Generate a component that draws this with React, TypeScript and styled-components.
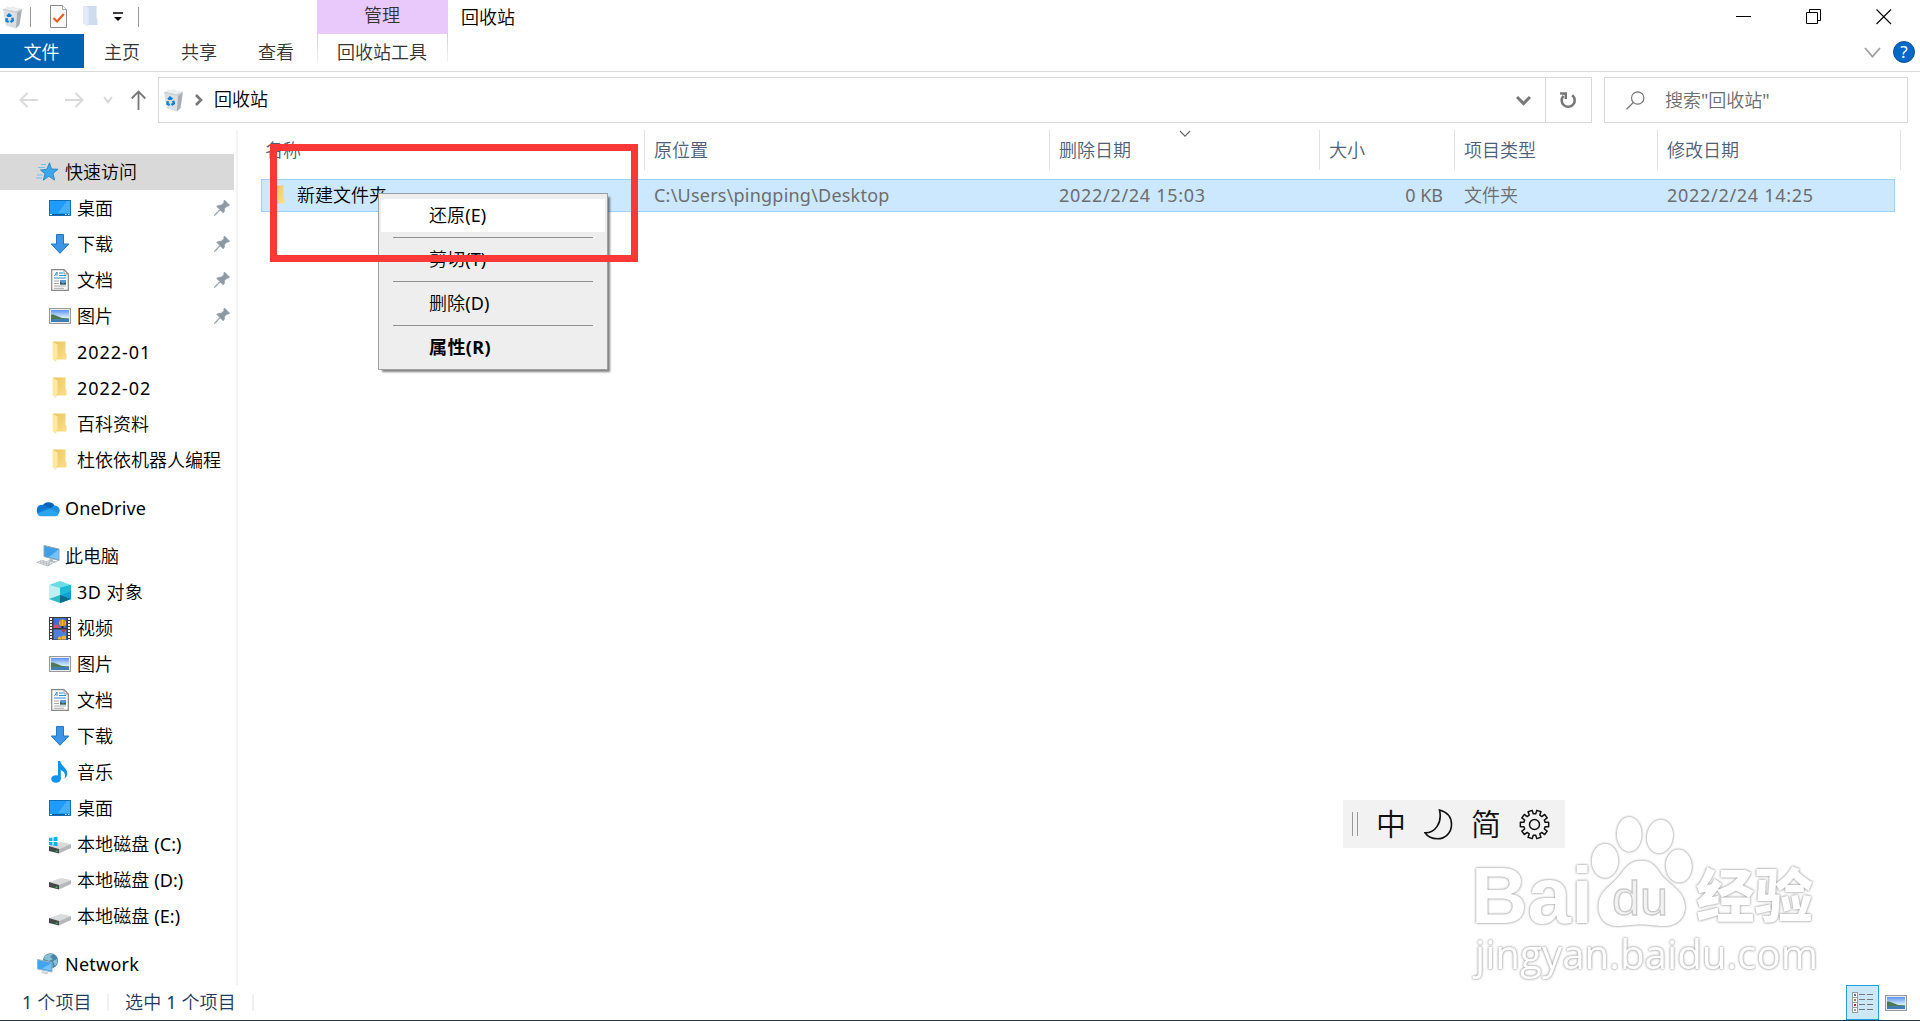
import type { ReactNode } from "react"
import { createGlobalStyle, styled } from "styled-components"

const theme = {
  text: "#000000",
  ribbonText: "#333333",
  headerText: "#4c607a",
  mutedText: "#6d6d6d",
  line: "#d9d9d9",
  accent: "#0063b1",
  selected: "#cce8ff",
  selectedBorder: "#99d1ff",
  frame: "#fb3838",
}

/* ---------- icons ---------- */

const RecycleBinIcon = () => (
  <svg width="21" height="24" viewBox="0 0 21 24">
    <path d="M1 4.500 15 7.500 13.800 23.500 3.800 20.500Z" fill="#dcdfe1" />
    <path d="M15 7.500 20 4 17.500 20 13.800 23.500Z" fill="#a9aeb2" />
    <path d="M1 4.500 6 2.500 20 4 15 7.500Z" fill="#c0c4c7" />
    <path d="M3 4.200 5 1 8 2.500 11 .8 14 3 17 2.500 18.500 4.300 14 6.500Z" fill="#eceeef" />
    <path d="M1 4.500 15 7.500 20 4" fill="none" stroke="#cdd0d3" />
    <path
      d="M5.200 11.500 7 9.500 9.300 11.200M10.300 12.800 10.800 15.500 8.500 17M6.700 17 4.500 15.800 4.700 13.200"
      fill="none"
      stroke="#0f80d8"
      strokeWidth="2.400"
    />
  </svg>
)

const CheckDocIcon = () => (
  <svg width="18" height="23" viewBox="0 0 18 23">
    <path d="M.5 .5H12.500L16.500 4.500V22.500H.5Z" fill="#f9f9f9" stroke="#8b8b8b" />
    <path d="M12.500 .5V4.500H16.500" fill="#fff" stroke="#a8a8a8" />
    <path d="M3.500 13 7 16.500 13.800 9" fill="none" stroke="#f05a1a" strokeWidth="2.200" />
  </svg>
)

const PaleFolderIcon = () => (
  <svg width="15" height="21" viewBox="0 0 15 21">
    <path d="M3 0H13.500V12L14.500 13V19H3Z" fill="#cfdcf0" />
    <path d="M0 0H3L5.500 2.500V20.500L0 18Z" fill="#e3ebf8" />
  </svg>
)

const FolderIcon = () => (
  <svg width="15" height="22" viewBox="0 0 15 22">
    <defs>
      <linearGradient id="folderBack" x1="0" y1="0" x2="1" y2="1">
        <stop offset="0" stopColor="#e9c560" />
        <stop offset="1" stopColor="#fbdf8b" />
      </linearGradient>
    </defs>
    <path d="M1 .5H13.500V12L14.500 13V18.500H3Z" fill="url(#folderBack)" />
    <path d="M.5 .5 5.500 3.500V16.500L4.300 17V21.500L.5 18Z" fill="#ffe9a2" />
  </svg>
)

const StarIcon = () => (
  <svg width="23" height="20" viewBox="0 0 23 20">
    <path
      d="M13.500 .8 15.500 7 22 7.200 17 11.500 18.600 18 12.800 14.300 7.300 18.200 9 11.700 4.500 8 10.800 7.300Z"
      fill="#3ba7ea"
      stroke="#1b7fc4"
      strokeWidth=".8"
    />
    <path d="M5 2.500H10M2 5.500H9M1 13H7M0 16H6" stroke="#79bce8" />
  </svg>
)

const DesktopIcon = () => (
  <svg width="22" height="16" viewBox="0 0 22 16">
    <rect x=".5" y=".5" width="21" height="15" fill="#1e9bfb" stroke="#0f6fb8" />
    <path d="M21 1V13L9 13 18 1Z" fill="#43aefc" />
    <path d="M1 14.500H21" stroke="#0d5c9d" />
    <path d="M1 14.500H3M16 14.500H17.500M19 14.500H20.500" stroke="#e8f5ff" />
  </svg>
)

const DownloadIcon = () => (
  <svg width="20" height="20" viewBox="0 0 20 20">
    <path
      d="M6.500 .5H13.500V10H18.800L10 19.300 1.200 10H6.500Z"
      fill="#3c95e6"
      stroke="#2577c0"
    />
  </svg>
)

const DocumentIcon = () => (
  <svg width="18" height="22" viewBox="0 0 18 22">
    <path d="M.7 .7H13L17.300 5V21.300H.7Z" fill="#fdfdfd" stroke="#888" strokeWidth="1.200" />
    <path d="M13 .7V5H17.300" fill="none" stroke="#999" />
    <path d="M3.500 7 6 3V7M8 4H12M8 6.500H15M3 9H15" stroke="#2b8fcb" fill="none" />
    <path d="M3 12H8M3 14.500H8M3 17H15M3 19.300H13" stroke="#aaa" />
    <rect x="9" y="11" width="6" height="4.500" fill="#5b9ad6" />
    <path d="M9 15.500V13L12 14.500 15 13.500V15.500Z" fill="#31584a" />
  </svg>
)

const PictureIcon = () => (
  <svg width="22" height="16" viewBox="0 0 22 16">
    <defs>
      <linearGradient id="sky" x1="0" y1="0" x2="0" y2="1">
        <stop offset="0" stopColor="#5b94f5" />
        <stop offset=".6" stopColor="#d6eaf8" />
        <stop offset="1" stopColor="#9fc6e8" />
      </linearGradient>
    </defs>
    <rect x=".6" y=".6" width="20.800" height="14.800" fill="#fff" stroke="#9a9a9a" strokeWidth="1.200" />
    <rect x="2" y="2" width="18" height="12" fill="url(#sky)" />
    <path d="M2 6.500C6 6 9 9 14 10L20 10.500V11L2 12Z" fill="#4c7a57" />
    <path d="M2 11.500 20 10.800V14H2Z" fill="#3e7eb2" />
  </svg>
)

const OneDriveIcon = () => (
  <svg width="25" height="17" viewBox="0 0 25 17">
    <path d="M7 7A7 7 0 0 1 19.500 5.500L15 11Z" fill="#0b63b8" />
    <path d="M6 15.500A5.500 5.500 0 0 1 6.500 4.700Q9 4.500 11 6L17 9.500 8 15.500Z" fill="#1177cf" />
    <path d="M14 9 19.500 5.500A5 5 0 0 1 24.700 11Q24.500 14 22 14.500Z" fill="#2090e0" />
    <path d="M2 13.500 14.300 8.500 24 13.500Q22.500 16.300 20 16.300H6Q3.500 16.300 2 13.500Z" fill="#2ba4ee" />
  </svg>
)

const ComputerIcon = () => (
  <svg width="24" height="22" viewBox="0 0 24 22">
    <path d="M8 .5 23 4V15.500L8 11.500Z" fill="#3d9fe8" stroke="#9aa8b2" />
    <path d="M22.500 4.500V14.500L13 12Z" fill="#74c3fb" />
    <path d="M14 13.500 17 14.500V16L22 16.500 18 18 11 16 13.500 15Z" fill="#b4bbc0" />
    <path d="M0 17.200 6 14.700 17 18.300 12 21.500Z" fill="#b4babf" />
    <path d="M2.500 17 12 20M5 15.800 15 18.800" stroke="#f0f2f3" strokeDasharray="2 1" />
  </svg>
)

const CubeIcon = () => (
  <svg width="22" height="22" viewBox="0 0 22 22">
    <path d="M0 4 11 0 22 4 11 8Z" fill="#6bdce4" />
    <path d="M0 4 11 7V22L0 18Z" fill="#c2eff1" />
    <path d="M22 4 11 7V22L22 18Z" fill="#109fdc" />
    <path d="M11 7 22 4V10L11 15Z" fill="#22b8d8" />
    <path d="M0 18 11 14 22 18 11 22Z" fill="#31b9c7" />
    <path d="M11 14 22 18 11 22Z" fill="#0a6c88" />
  </svg>
)

const VideoIcon = () => (
  <svg width="22" height="23" viewBox="0 0 22 23">
    <rect width="22" height="23" fill="#3a3a3a" />
    <path d="M2 1V23M20 1V23" stroke="#f2f2f2" strokeWidth="2" strokeDasharray="2 1" />
    <rect x="4.500" y="1" width="13" height="10" fill="#3d6fd0" />
    <rect x="4.500" y="12.500" width="13" height="10" fill="#4c80dc" />
    <path d="M4.500 8.500Q7 6.500 9.500 8.500L11 11H4.500Z" fill="#d64b78" />
    <ellipse cx="13.500" cy="6" rx="3.500" ry="3.500" fill="#f0bd1c" />
    <path d="M12 3V9M15 3V9" stroke="#c4471d" strokeWidth=".7" />
    <path d="M12.500 9H14.500V11H12.500Z" fill="#222" />
    <path d="M12 12.500H17L14.500 16Z" fill="#c03b3b" />
    <path d="M9 22.500V20.500L11 19 12.500 22.500ZM12.500 22.500 12.500 19.500Q15 17.500 17 19.500V22.500Z" fill="#eeb22c" />
  </svg>
)

const MusicIcon = () => (
  <svg width="17" height="22" viewBox="0 0 17 22">
    <ellipse cx="5" cy="18" rx="4.800" ry="3.800" fill="#0e93ee" />
    <path
      d="M7 0H9.300C9.800 4.500 16 7 16.300 12 16.300 15 15 16.500 13.500 17.500 15 13 13 10.500 9.800 9V18H7Z"
      fill="#0e93ee"
    />
  </svg>
)

const DriveIcon = ({ system = false }: { system?: boolean }) => (
  <svg width="22" height="24" viewBox="0 0 22 24">
    <path d="M0 14 12 10 22 12 10 17Z" fill="#d9dadc" />
    <path d="M10 17 22 12V16L10 21.500Z" fill="#b5b7ba" />
    <path d="M0 14 10 17V21.500L0 19Z" fill="#45474a" />
    <path d="M7.500 18.700V19.800" stroke="#3fe04c" strokeWidth="1.800" />
    {system && (
      <path
        d="M0 6 3.500 5.500V9H0ZM4.500 5.300 8.500 4.800V9H4.500ZM0 10H3.500V13.500L0 13ZM4.500 10H8.500V14.200L4.500 13.700Z"
        fill="#12b0ee"
      />
    )}
  </svg>
)

const NetworkIcon = () => (
  <svg width="22" height="22" viewBox="0 0 22 22">
    <circle cx="13.500" cy="7.800" r="7.600" fill="#4688ad" />
    <path d="M8 3Q13 0 16 1L13 4 16 6 12 8 7 6ZM16 8 20 6Q21 10 18 13Z" fill="#8dc0d4" />
    <path d="M.5 6.500 15 9.500V19L.5 16Z" fill="#3fa5ee" stroke="#a3b3be" />
    <path d="M14 10.500V17.500L5 15.500Z" fill="#70c2fa" />
    <path d="M5 18 12 19.500 10 21.500 4 20Z" fill="#cfd3d6" />
  </svg>
)

const PinIcon = () => (
  <svg width="16" height="16" viewBox="0 0 16 16">
    <path
      d="M10.500 0 15.700 5.200 14 6.200 13 6 10.500 8.800Q11 11.500 9.300 13L6.200 9.900 .8 15.700 .2 15.200 5.800 9.500 2.700 6.300Q4.300 4.800 7 5.300L10 2.700 9.600 1.600Z"
      fill="#8d9aa4"
      stroke="#8d9aa4"
      strokeWidth=".6"
    />
  </svg>
)

const BackIcon = () => (
  <svg width="19" height="16" viewBox="0 0 19 16">
    <path d="M8.500 1 1.500 8 8.500 15M1.500 8H19" fill="none" stroke="#dadada" strokeWidth="2" />
  </svg>
)

const ForwardIcon = () => (
  <svg width="19" height="16" viewBox="0 0 19 16">
    <path d="M10.500 1 17.500 8 10.500 15M17.500 8H0" fill="none" stroke="#dadada" strokeWidth="2" />
  </svg>
)

const UpIcon = () => (
  <svg width="15" height="20" viewBox="0 0 15 20">
    <path d="M.7 8.500 7.500 1.500 14.300 8.500M7.500 1.500V20" fill="none" stroke="#787878" strokeWidth="1.800" />
  </svg>
)

interface ChevronProps {
  width: number
  height: number
  color: string
  weight: number
}

const ChevronDown = ({ width, height, color, weight }: ChevronProps) => (
  <svg width={width} height={height} viewBox={`0 0 ${width} ${height}`}>
    <path
      d={`M1 1 ${width / 2} ${height - weight * 0.8} ${width - 1} 1`}
      fill="none"
      stroke={color}
      strokeWidth={weight}
    />
  </svg>
)

const ChevronRight = () => (
  <svg width="8" height="12" viewBox="0 0 8 12">
    <path d="M1 1 6 6 1 11" fill="none" stroke="#777" strokeWidth="2.600" />
  </svg>
)

const RefreshIcon = () => (
  <svg width="17" height="17" viewBox="0 0 17 17">
    <path d="M12.200 3.200A6.500 6.500 0 1 1 3.500 3.800" fill="none" stroke="#777" strokeWidth="2.600" />
    <path d="M0 .3H7V7H4.600V3L0 2.600Z" fill="#777" />
  </svg>
)

const SearchIcon = () => (
  <svg width="19" height="19" viewBox="0 0 19 19">
    <circle cx="11.700" cy="7" r="6.200" fill="none" stroke="#767676" strokeWidth="1.200" />
    <path d="M7.300 11.500 .6 18.300" stroke="#767676" strokeWidth="1.300" />
  </svg>
)

const DetailsViewIcon = () => (
  <svg width="22" height="22" viewBox="0 0 22 22">
    <rect x=".5" y=".5" width="5" height="20" fill="#fff" stroke="#9a9a9a" />
    <path d="M0 5.500H6M0 10.500H6M0 15.500H6" stroke="#9a9a9a" />
    <rect x="2" y="2" width="2" height="2" fill="#3d7ca8" />
    <rect x="2" y="7" width="2" height="2" fill="#7c8c2e" />
    <rect x="2" y="12" width="2" height="2" fill="#a33333" />
    <rect x="2" y="17" width="2" height="2" fill="#8aa7b8" />
    <path d="M7 2.500H13M15 2.500H21M7 7.500H13M15 7.500H21M7 12.500H13M15 12.500H21M7 17.500H13M15 17.500H21" stroke="#777" />
  </svg>
)

const MoonIcon = () => (
  <svg width="29" height="31" viewBox="0 0 29 31">
    <path
      d="M15.500 1C24 3.200 27.500 9 27.500 15.500 27.500 24 21 29.800 13.500 29.800 8 29.800 3.500 27.500 1 23.800 11 24 18.500 14 15.500 1Z"
      fill="none"
      stroke="#111"
      strokeWidth="1.600"
    />
  </svg>
)

const TEETH = 10

const gearPath = () => {
  const points: string[] = []
  for (let i = 0; i < TEETH; i++) {
    const middle = ((i + 0.5) / TEETH) * Math.PI * 2 - Math.PI / 2
    const corners = [
      [-0.2, 10.8],
      [-0.15, 14.3],
      [0.15, 14.3],
      [0.2, 10.8],
    ]
    corners.forEach(([offset, r]) => {
      const x = 15.5 + Math.cos(middle + offset) * r
      const y = 15.5 + Math.sin(middle + offset) * r
      points.push(`${x.toFixed(2)} ${y.toFixed(2)}`)
    })
  }
  return `M${points.join("L")}Z`
}

const GearIcon = () => (
  <svg width="31" height="31" viewBox="0 0 31 31">
    <path d={gearPath()} fill="none" stroke="#111" strokeWidth="1.500" strokeLinejoin="round" />
    <circle cx="15.500" cy="15.500" r="5" fill="none" stroke="#111" strokeWidth="1.500" />
  </svg>
)

const Watermark = () => (
  <WatermarkSvg width="370" height="190" viewBox="1465 800 370 190">
    <g className="glow">
      <text x="1471" y="923" fontSize="79" fontWeight="700" textLength="122" lengthAdjust="spacingAndGlyphs">
        Bai
      </text>
      <text x="1696" y="917" fontSize="58" fontWeight="900" textLength="117" lengthAdjust="spacingAndGlyphs">
        经验
      </text>
      <text x="1475" y="969" fontSize="40" className="url" textLength="343" lengthAdjust="spacingAndGlyphs">
        jingyan.baidu.com
      </text>
    </g>
    <g className="glow">
      <ellipse cx="1605" cy="860.700" rx="13.300" ry="17" />
      <ellipse cx="1629.200" cy="834.300" rx="12.400" ry="17.400" />
      <ellipse cx="1659.900" cy="836.500" rx="13" ry="16.800" transform="rotate(8 1659.900 836.500)" />
      <ellipse cx="1678.800" cy="866" rx="13" ry="16.600" transform="rotate(-4 1678.800 866)" />
      <path d="M1641.600 860.700C1652 860.700 1656 867 1660 873 1666 883 1685 890 1685 907 1685 919 1676 926 1664 926 1655 926 1650 924.500 1641 924.500 1632 924.500 1626 926 1617 926 1605 926 1598.500 918 1598.500 907 1598.500 890 1612 886 1620 875 1626 867 1630 860.700 1641.600 860.700Z" />
    </g>
    <text
      x="1612"
      y="915"
      fontSize="48"
      fill="#f2f2f2"
      stroke="#cacaca"
      strokeWidth="1.300"
      textLength="56"
      lengthAdjust="spacingAndGlyphs"
    >
      du
    </text>
  </WatermarkSvg>
)

/* ---------- data ---------- */

interface NavEntry {
  label: string
  icon: ReactNode
  root?: boolean
  pinned?: boolean
  active?: boolean
  spacing?: number
}

const navGroups: NavEntry[][] = [
  [
    { label: "快速访问", icon: <StarIcon />, root: true, active: true },
    { label: "桌面", icon: <DesktopIcon />, pinned: true },
    { label: "下载", icon: <DownloadIcon />, pinned: true },
    { label: "文档", icon: <DocumentIcon />, pinned: true },
    { label: "图片", icon: <PictureIcon />, pinned: true },
    { label: "2022-01", icon: <FolderIcon />, spacing: 0.95 },
    { label: "2022-02", icon: <FolderIcon />, spacing: 0.95 },
    { label: "百科资料", icon: <FolderIcon /> },
    { label: "杜依依机器人编程", icon: <FolderIcon /> },
  ],
  [{ label: "OneDrive", icon: <OneDriveIcon />, root: true, spacing: 0.15 }],
  [
    { label: "此电脑", icon: <ComputerIcon />, root: true },
    { label: "3D 对象", icon: <CubeIcon />, spacing: 0.5 },
    { label: "视频", icon: <VideoIcon /> },
    { label: "图片", icon: <PictureIcon /> },
    { label: "文档", icon: <DocumentIcon /> },
    { label: "下载", icon: <DownloadIcon /> },
    { label: "音乐", icon: <MusicIcon /> },
    { label: "桌面", icon: <DesktopIcon /> },
    { label: "本地磁盘 (C:)", icon: <DriveIcon system />, spacing: 0.1 },
    { label: "本地磁盘 (D:)", icon: <DriveIcon />, spacing: 0.1 },
    { label: "本地磁盘 (E:)", icon: <DriveIcon />, spacing: 0.1 },
  ],
  [{ label: "Network", icon: <NetworkIcon />, root: true, spacing: 0.25 }],
]

const menuItems = ["还原(E)", "剪切(T)", "删除(D)", "属性(R)"]

/* ---------- page ---------- */

const App = () => {
  return (
    <>
      <GlobalStyle />
      <Window>
        <TitleBar>
          <QuickAccess>
            <RecycleBinIcon />
            <Divider $left={7} />
            <Slot $left={19}>
              <CheckDocIcon />
            </Slot>
            <Slot $left={15}>
              <PaleFolderIcon />
            </Slot>
            <Slot $left={15}>
              <svg width="10" height="10" viewBox="0 0 10 10">
                <path d="M0 1H10" stroke="#000" strokeWidth="1.500" />
                <path d="M1 5H9L5 9Z" fill="#000" />
              </svg>
            </Slot>
            <Divider $left={15} />
          </QuickAccess>
          <ContextTabTitle>管理</ContextTabTitle>
          <WindowTitle>回收站</WindowTitle>
          <WindowButtons>
            <svg width="16" height="16" viewBox="0 0 16 16">
              <path d="M0 7.500H15" stroke="#000" />
            </svg>
            <svg width="16" height="16" viewBox="0 0 16 16">
              <path d="M.5 3.500H11.500V14.500H.5ZM3.500 3.500V.5H14.500V11.500H11.500" fill="none" stroke="#000" />
            </svg>
            <svg width="16" height="16" viewBox="0 0 16 16">
              <path d="M.5 .5 15 15M15 .5 .5 15" stroke="#000" strokeWidth="1.100" />
            </svg>
          </WindowButtons>
        </TitleBar>

        <Ribbon>
          <FileTab>文件</FileTab>
          <RibbonTab>主页</RibbonTab>
          <RibbonTab>共享</RibbonTab>
          <RibbonTab>查看</RibbonTab>
          <ContextTab>回收站工具</ContextTab>
          <RibbonEnd>
            <ChevronDown width={17} height={11} color="#a0a0a0" weight={1.8} />
            <HelpBadge>?</HelpBadge>
          </RibbonEnd>
        </Ribbon>

        <AddressRow>
          <NavButtons>
            <BackIcon />
            <Slot $left={27}>
              <ForwardIcon />
            </Slot>
            <Slot $left={19}>
              <ChevronDown width={10} height={8} color="#d6d6d6" weight={2} />
            </Slot>
            <Slot $left={18}>
              <UpIcon />
            </Slot>
          </NavButtons>
          <AddressBox>
            <RecycleBinIcon />
            <Slot $left={11}>
              <ChevronRight />
            </Slot>
            <AddressText>回收站</AddressText>
            <AddressDrop>
              <ChevronDown width={15} height={10} color="#777" weight={3} />
            </AddressDrop>
            <RefreshButton>
              <RefreshIcon />
            </RefreshButton>
          </AddressBox>
          <SearchBox>
            <SearchIcon />
            <span>搜索"回收站"</span>
          </SearchBox>
        </AddressRow>

        <Body>
          <Sidebar>
            {navGroups.map((group, g) => (
              <NavGroup key={g}>
                {group.map((entry) => (
                  <NavItem key={entry.label} $root={entry.root} $active={entry.active}>
                    <NavIcon>{entry.icon}</NavIcon>
                    <NavLabel $spacing={entry.spacing}>{entry.label}</NavLabel>
                    {entry.pinned && <PinIcon />}
                  </NavItem>
                ))}
              </NavGroup>
            ))}
          </Sidebar>

          <FileList>
            <HeaderRow>
              <HeaderCell $left={4}>名称</HeaderCell>
              <HeaderCell>原位置</HeaderCell>
              <HeaderCell>
                删除日期
                <SortMark>
                  <ChevronDown width={12} height={7} color="#666" weight={1.1} />
                </SortMark>
              </HeaderCell>
              <HeaderCell>大小</HeaderCell>
              <HeaderCell>项目类型</HeaderCell>
              <HeaderCell>修改日期</HeaderCell>
            </HeaderRow>
            <FileRow>
              <NameCell>
                <FolderIcon />
                <span>新建文件夹</span>
              </NameCell>
              <Cell $spacing={0.22}>C:\Users\pingping\Desktop</Cell>
              <Cell $spacing={0.7}>2022/2/24 15:03</Cell>
              <SizeCell>0 KB</SizeCell>
              <Cell>文件夹</Cell>
              <Cell $spacing={0.7}>2022/2/24 14:25</Cell>
            </FileRow>
          </FileList>
        </Body>

        <StatusBar>
          <StatusText $width={87}>1 个项目</StatusText>
          <StatusText $width={129}>选中 1 个项目</StatusText>
          <ViewButtons>
            <ViewButton>
              <DetailsViewIcon />
            </ViewButton>
            <PictureIcon />
          </ViewButtons>
        </StatusBar>

        <ContextMenu>
          {menuItems.map((item, i) => (
            <MenuItem key={item} $hover={i === 0} $bold={i === menuItems.length - 1}>
              {item}
            </MenuItem>
          ))}
        </ContextMenu>
        <RedFrame />
        <ImeBar>
          <ImeGrip />
          <span>中</span>
          <MoonIcon />
          <span>简</span>
          <GearIcon />
        </ImeBar>
        <Watermark />
      </Window>
    </>
  )
}

const GlobalStyle = createGlobalStyle`
  * {
    box-sizing: border-box;
  }

  body {
    margin: 0;
    background: #fff;
    overflow: hidden;
  }

  svg {
    display: block;
    flex: none;
  }
`

const Window = styled.div`
  position: relative;
  display: flex;
  flex-direction: column;
  width: 1920px;
  height: 1021px;
  background: #fff;
  color: ${theme.text};
  font-family: "Noto Sans", "Noto Sans CJK SC DemiLight", "Noto Sans CJK SC", sans-serif;
  font-size: 18px;
  line-height: 24px;
  white-space: nowrap;
  border-bottom: 1px solid #20384c;
`

const TitleBar = styled.div`
  display: flex;
  height: 34px;
`

const QuickAccess = styled.div`
  display: flex;
  align-items: center;
  width: 317px;
  padding: 0 0 1px 2px;
`

const Slot = styled.div<{ $left: number }>`
  margin-left: ${({ $left }) => $left}px;
`

const Divider = styled.div<{ $left: number }>`
  width: 1px;
  height: 20px;
  margin-left: ${({ $left }) => $left}px;
  background: #999;
`

const ContextTabTitle = styled.div`
  width: 131px;
  padding: 3px 1px 0 0;
  background: #e9c9fb;
  color: ${theme.ribbonText};
  text-align: center;
`

const WindowTitle = styled.div`
  padding: 5px 0 0 13px;
`

const WindowButtons = styled.div`
  display: flex;
  gap: 54px;
  margin-left: auto;
  padding: 9px 28px 0 0;
`

const Ribbon = styled.div`
  display: flex;
  height: 38px;
  border-bottom: 1px solid ${theme.line};
  color: ${theme.ribbonText};
`

const RibbonTab = styled.div`
  width: 77px;
  padding: 6px 1px 0 0;
  text-align: center;
`

const FileTab = styled(RibbonTab)`
  width: 84px;
  height: 34px;
  background: ${theme.accent};
  color: #fff;
`

const ContextTab = styled(RibbonTab)`
  width: 131px;
  height: 28px;
  margin-left: 2px;
  border-style: solid;
  border-width: 0 1px;
  border-image: linear-gradient(#cfcfcf, #f4f4f4) 1;
`

const RibbonEnd = styled.div`
  display: flex;
  align-items: center;
  gap: 12px;
  height: 36px;
  margin-left: auto;
  padding-right: 5px;
`

const HelpBadge = styled.div`
  width: 22px;
  height: 22px;
  border: 1px solid #0a4f96;
  border-radius: 50%;
  background: #0069c8;
  color: #fff;
  font-size: 17px;
  line-height: 20px;
  text-align: center;
`

const AddressRow = styled.div`
  display: flex;
  height: 58px;
  padding-top: 5px;
`

const NavButtons = styled.div`
  display: flex;
  align-items: center;
  width: 158px;
  height: 46px;
  padding-left: 19px;
`

const AddressBox = styled.div`
  display: flex;
  align-items: center;
  width: 1434px;
  height: 46px;
  padding-left: 4px;
  border: 1px solid ${theme.line};
`

const AddressText = styled.div`
  margin-left: 11px;
  padding-bottom: 2px;
`

const AddressDrop = styled.div`
  margin-left: auto;
  padding: 2px 14px 0 0;
`

const RefreshButton = styled.div`
  display: flex;
  align-items: center;
  justify-content: center;
  width: 46px;
  height: 44px;
  border-left: 1px solid ${theme.line};
`

const SearchBox = styled.div`
  display: flex;
  align-items: center;
  gap: 20px;
  width: 304px;
  height: 46px;
  margin-left: 12px;
  padding-left: 21px;
  border: 1px solid ${theme.line};
  color: ${theme.mutedText};
`

const Body = styled.div`
  display: flex;
  height: 855px;
`

const Sidebar = styled.div`
  display: flex;
  flex-direction: column;
  gap: 12px;
  width: 238px;
  padding-top: 24px;
  border-right: 2px solid #f3f3f3;
`

const NavGroup = styled.div`
  display: flex;
  flex-direction: column;
`

const NavItem = styled.div<{ $root?: boolean; $active?: boolean }>`
  display: flex;
  align-items: center;
  width: 234px;
  height: 36px;
  padding: 0 4px 0 ${({ $root }) => ($root ? 35 : 47)}px;
  background: ${({ $active }) => ($active ? "#d9d9d9" : "transparent")};
`

const NavIcon = styled.div`
  display: flex;
  justify-content: center;
  width: 25px;
`

const NavLabel = styled.div<{ $spacing?: number }>`
  flex: 1;
  margin-left: 5px;
  letter-spacing: ${({ $spacing = 0 }) => $spacing}px;
`

const FileList = styled.div`
  flex: 1;
  padding-left: 23px;
`

const HeaderRow = styled.div`
  display: grid;
  grid-template-columns: 384px 405px 270px 135px 203px 243px;
  height: 40px;
  color: ${theme.headerText};
`

const HeaderCell = styled.div<{ $left?: number }>`
  position: relative;
  padding: 8px 0 0 ${({ $left = 9 }) => $left}px;
  border-right: 1px solid #e2e2e2;
`

const SortMark = styled.div`
  position: absolute;
  top: 0;
  left: 129px;
`

const FileRow = styled.div`
  display: grid;
  grid-template-columns: 384px 405px 270px 135px 203px 1fr;
  align-items: center;
  width: 1634px;
  height: 33px;
  margin-top: 9px;
  background: ${theme.selected};
  box-shadow: inset 0 0 0 1px ${theme.selectedBorder};
  color: ${theme.mutedText};
`

const Cell = styled.div<{ $spacing?: number }>`
  padding: 0 0 2px 9px;
  letter-spacing: ${({ $spacing = 0 }) => $spacing}px;
`

const SizeCell = styled(Cell)`
  padding-right: 12px;
  text-align: right;
`

const NameCell = styled.div`
  display: flex;
  align-items: center;
  gap: 12px;
  padding-left: 9px;
  color: ${theme.text};

  span {
    padding-bottom: 2px;
  }
`

const StatusBar = styled.div`
  display: flex;
  align-items: center;
  height: 35px;
  padding-left: 22px;
  color: #1e395b;
`

const StatusText = styled.div<{ $width: number }>`
  width: ${({ $width }) => $width}px;
  margin-right: 16px;
  border-right: 2px solid #f0f0f0;
  line-height: 17px;
  letter-spacing: 0.15px;
`

const ViewButtons = styled.div`
  display: flex;
  align-items: center;
  gap: 6px;
  margin-left: auto;
  padding-right: 13px;
`

const ViewButton = styled.div`
  display: flex;
  align-items: center;
  justify-content: center;
  width: 33px;
  height: 35px;
  border: 1px solid #26a0da;
  background: #cbe8f6;
`

const ContextMenu = styled.div`
  position: absolute;
  top: 193px;
  left: 378px;
  display: flex;
  flex-direction: column;
  gap: 11px;
  width: 230px;
  height: 177px;
  padding: 5px 2px;
  border: 1px solid #a0a0a0;
  background: #eeeeee;
  box-shadow: 3px 3px 2px -1px rgba(0, 0, 0, 0.5);
`

const MenuItem = styled.div<{ $hover: boolean; $bold: boolean }>`
  position: relative;
  height: 33px;
  padding-left: 48px;
  background: ${({ $hover }) => ($hover ? "#fff" : "transparent")};
  font-weight: ${({ $bold }) => ($bold ? 700 : 400)};
  letter-spacing: ${({ $bold }) => ($bold ? 0.4 : 0.1)}px;
  line-height: 32px;

  &:last-child {
    font-family: "Noto Sans", "Noto Sans CJK SC", sans-serif;
  }

  &:not(:first-child)::before {
    content: "";
    position: absolute;
    top: -6px;
    left: 12px;
    width: 200px;
    height: 1px;
    background: #919191;
  }
`

const RedFrame = styled.div`
  position: absolute;
  top: 144px;
  left: 270px;
  width: 368px;
  height: 118px;
  border: 7px solid ${theme.frame};
`

const ImeBar = styled.div`
  position: absolute;
  top: 800px;
  left: 1343px;
  display: flex;
  align-items: center;
  width: 222px;
  height: 48px;
  padding-left: 9px;
  background: #f2f2f2;
  color: #111;
  font-size: 30px;
  line-height: 48px;

  span {
    width: 30px;
    margin: 0 18px 0 18px;
  }
`

const ImeGrip = styled.div`
  width: 6px;
  height: 24px;
  border: solid #999;
  border-width: 0 1px;
`

const WatermarkSvg = styled.svg`
  position: absolute;
  top: 800px;
  left: 1465px;
  font-family: "Liberation Sans", "Noto Sans CJK SC", sans-serif;

  .url {
    font-family: "Open Sans", sans-serif;
    font-weight: 400;
  }

  .glow {
    fill: #fff;
    filter: drop-shadow(0 0 1px #909090) drop-shadow(0 0 1px #ddd);
  }
`

export default App
